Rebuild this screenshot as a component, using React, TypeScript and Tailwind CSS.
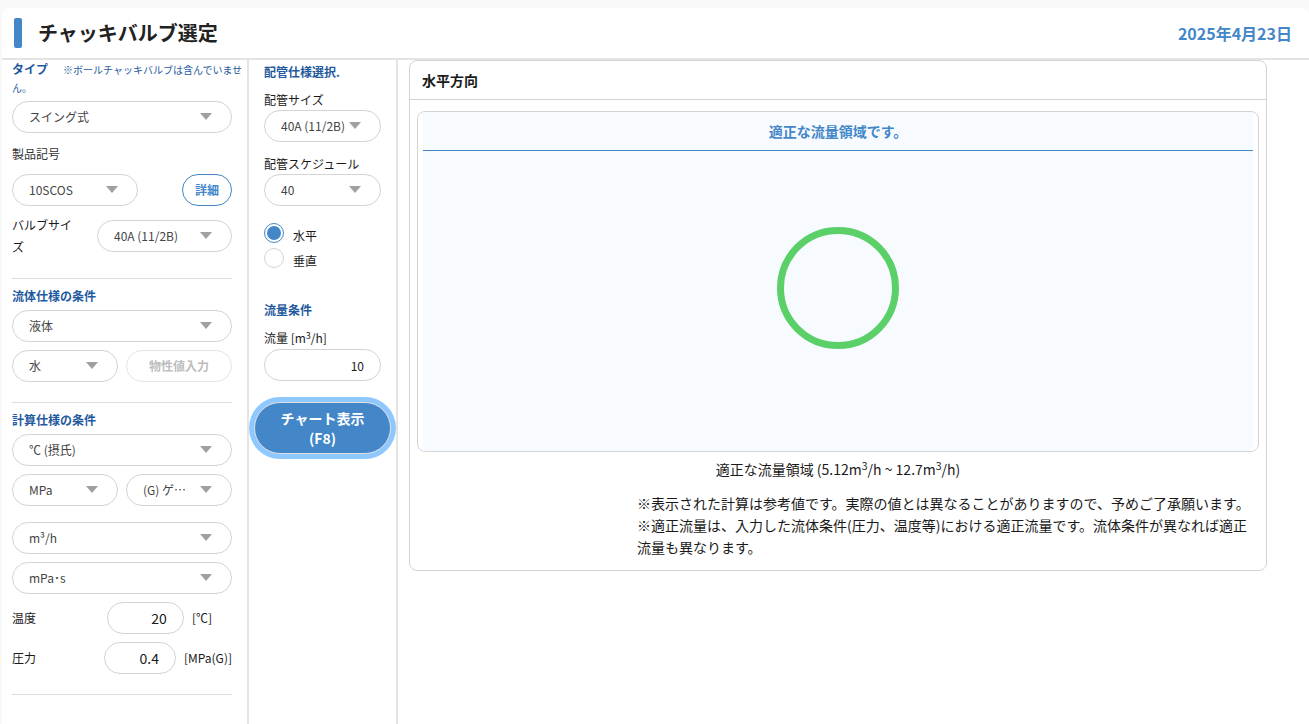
import React, { useState } from 'react';
import clsx from 'clsx';

interface PillSelectProps {
  id?: string;
  label: string;
  options: string[];
  className?: string;
  compact?: boolean;
}

const PillSelect = ({ id, label, options, className, compact }: PillSelectProps) => (
  <div className={clsx('relative min-w-0', className)}>
    <select
      id={id}
      aria-label={label}
      className={clsx(
        'block w-full h-8 appearance-none rounded-full border border-[#d4d4d4] bg-white pl-4 text-xs text-[#444] truncate outline-none',
        compact ? 'pr-8' : 'pr-10'
      )}
    >
      {options.map((option) => (
        <option key={option}>{option}</option>
      ))}
    </select>
    <svg
      className="absolute top-3 right-5 pointer-events-none"
      width="12"
      height="7"
      viewBox="0 0 12 7"
      fill="#a0a0a0"
    >
      <path d="M0 0h12L6 7z" />
    </svg>
  </div>
);

const SectionTitle = ({ children }: { children: React.ReactNode }) => (
  <h2 className="text-xs leading-5 font-bold text-[#1f5a9f]">{children}</h2>
);

interface NumberRowProps {
  id: string;
  label: string;
  unit: string;
  value: string;
}

const NumberRow = ({ id, label, unit, value }: NumberRowProps) => (
  <div className="flex items-center justify-between gap-2">
    <label htmlFor={id} className="text-xs">{label}</label>
    <div className={clsx('flex items-center gap-2', id === 'temperature' && 'mr-5')}>
      <input
        id={id}
        type="text"
        defaultValue={value}
        className={clsx(
          'h-8 rounded-full border border-[#d4d4d4] bg-white px-4 text-right text-sm outline-none',
          id === 'temperature' ? 'w-[77px]' : 'w-[72px]'
        )}
      />
      <span className="text-xs">{unit}</span>
    </div>
  </div>
);

const ConditionPanel = () => (
  <section className="w-[247px] shrink-0 border-r-2 border-[#e4e4e4] pl-2.5 pr-[15px]">
    <div className="-mr-3 pt-px text-[10px] leading-[18px] text-[#1f5a9f]">
      <h2 className="inline-block align-baseline text-xs leading-none font-bold mr-[15px]">タイプ</h2>
      ※ボールチャッキバルブは含んでいません。
    </div>
    <PillSelect label="タイプ" options={['スイング式', 'リフト式']} className="mt-1" />

    <label htmlFor="product" className="block mt-2.5 mb-[9px] text-xs leading-[22px] text-[#333]">製品記号</label>
    <div className="flex justify-between">
      <PillSelect id="product" label="製品記号" options={['10SCOS']} className="w-[126px]" />
      <button className="w-[50px] h-8 rounded-full border border-[#4387c9] bg-white text-xs font-bold text-[#4387c9]">
        詳細
      </button>
    </div>
    <div className="mt-2 flex items-center justify-between">
      <label htmlFor="valve-size" className="w-16 text-xs leading-[22px]">バルブサイズ</label>
      <PillSelect id="valve-size" label="バルブサイズ" options={['40A (11/2B)', '50A (2B)']} className="w-[135px]" />
    </div>
    <hr className="mt-5 mb-[7px] border-[#dedede]" />

    <SectionTitle>流体仕様の条件</SectionTitle>
    <div className="mt-1 grid grid-cols-2 gap-2">
      <PillSelect label="流体の状態" options={['液体', '気体']} className="col-span-2" />
      <PillSelect label="流体" options={['水']} />
      <button disabled className="h-8 rounded-full border border-[#e4e4e4] bg-white text-xs font-bold text-[#bdbdbd]">
        物性値入力
      </button>
    </div>
    <hr className="mt-5 mb-[7px] border-[#dedede]" />

    <SectionTitle>計算仕様の条件</SectionTitle>
    <div className="mt-1 grid grid-cols-2 gap-2">
      <PillSelect label="温度の単位" options={['℃ (摂氏)', '℉ (華氏)']} className="col-span-2" />
      <PillSelect label="圧力の単位" options={['MPa', 'kPa']} />
      <PillSelect label="圧力の基準" options={['(G) ゲージ圧', '(A) 絶対圧']} />
    </div>
    <div className="mt-4 flex flex-col gap-2">
      <PillSelect label="流量の単位" options={['m³/h', 'L/min']} />
      <PillSelect label="粘度の単位" options={['mPa･s', 'Pa･s']} />
      <NumberRow id="temperature" label="温度" unit="[℃]" value="20" />
      <NumberRow id="pressure" label="圧力" unit="[MPa(G)]" value="0.4" />
    </div>
    <hr className="mt-5 border-[#dedede]" />
  </section>
);

const directions = ['水平', '垂直'];

const PipePanel = () => {
  const [direction, setDirection] = useState('水平');

  return (
    <section className="w-[149px] shrink-0 border-r-2 border-[#e4e4e4] px-[15px] pt-0.5">
      <SectionTitle>配管仕様選択.</SectionTitle>
      <label htmlFor="pipe-size" className="block mt-2 text-xs leading-5">配管サイズ</label>
      <PillSelect id="pipe-size" label="配管サイズ" options={['40A (11/2B)', '50A (2B)']} compact />
      <label htmlFor="schedule" className="block mt-3 text-xs leading-5">配管スケジュール</label>
      <PillSelect id="schedule" label="配管スケジュール" options={['40', '80']} compact />

      <div className="mt-[17px] flex flex-col gap-[5px]">
        {directions.map((item) => (
          <label key={item} className="flex items-center h-5 text-xs">
            <input
              type="radio"
              name="direction"
              checked={direction === item}
              onChange={() => setDirection(item)}
              className="w-5 h-5 mr-[9px] appearance-none rounded-full border border-[#d4d4d4] p-0.5 bg-clip-content checked:border-[#4387c9] checked:bg-[#4387c9]"
            />
            <span className="pt-1.5">{item}</span>
          </label>
        ))}
      </div>

      <div className="mt-8">
        <SectionTitle>流量条件</SectionTitle>
      </div>
      <label htmlFor="flow" className="block mt-2 mb-px text-xs leading-5">流量 [m<sup>3</sup>/h]</label>
      <input
        id="flow"
        type="text"
        defaultValue="10"
        className="block w-full h-8 rounded-full border border-[#d4d4d4] bg-white px-4 text-right text-xs outline-none"
      />
      <button className="block -mx-2.5 mt-[21px] w-[137px] rounded-full border border-[#e0e0e0] bg-[#4387c9] px-5 py-[5px] text-sm leading-5 font-bold text-white ring-5 ring-[#8fc8ff]">
        チャート表示 (F8)
      </button>
    </section>
  );
};

const ResultCard = () => (
  <section className="ml-[11px] mr-[42px] flex-1 self-start rounded-lg border border-[#d4d4d4] bg-white">
    <h2 className="border-b border-[#d4d4d4] px-3 py-2 text-sm leading-[22px] font-bold">水平方向</h2>
    <div className="px-[7px] pt-[11px]">
      <div className="rounded-lg border border-[#d4d4d4] px-[5px]">
        <div className="bg-[#f7fbff]">
          <p className="border-b border-[#4387c9] py-2 text-center text-sm leading-[22px] font-bold text-[#4387c9]">
            適正な流量領域です。
          </p>
          <div className="flex h-[300px] justify-center pt-[76px]">
            <svg width="122" height="122" viewBox="0 0 122 122" fill="none">
              <circle cx="61" cy="61" r="57.5" stroke="#5bd068" strokeWidth="7" />
            </svg>
          </div>
        </div>
      </div>
    </div>
    <p className="mt-1.5 text-center text-sm leading-[22px]">
      適正な流量領域 (5.12m<sup>3</sup>/h ~ 12.7m<sup>3</sup>/h)
    </p>
    <div className="ml-auto mr-[15px] my-3 w-[614px] max-w-full text-sm leading-[22px]">
      <p>※表示された計算は参考値です。実際の値とは異なることがありますので、予めご了承願います。</p>
      <p>※適正流量は、入力した流体条件(圧力、温度等)における適正流量です。流体条件が異なれば適正流量も異なります。</p>
    </div>
  </section>
);

export default function App() {
  return (
    <div className="flex min-h-screen flex-col bg-[#f9f9f9] pt-2 pl-0.5 font-['Noto_Sans_CJK_JP',sans-serif] text-[#1a1a1a]">
      <div className="flex flex-1 flex-col rounded-t-lg bg-white">
        <header className="flex items-center border-b-2 border-[#e4e4e4] pl-3 pr-[17px] h-[52px]">
          <span className="h-[30px] w-2 rounded-xs bg-[#4387c9]" />
          <h1 className="ml-4 text-xl font-bold text-[#222]">チャッキバルブ選定</h1>
          <time dateTime="2025-04-23" className="ml-auto text-base font-bold text-[#4387c9]">2025年4月23日</time>
        </header>
        <main className="flex flex-1">
          <ConditionPanel />
          <PipePanel />
          <ResultCard />
        </main>
      </div>
    </div>
  );
}
